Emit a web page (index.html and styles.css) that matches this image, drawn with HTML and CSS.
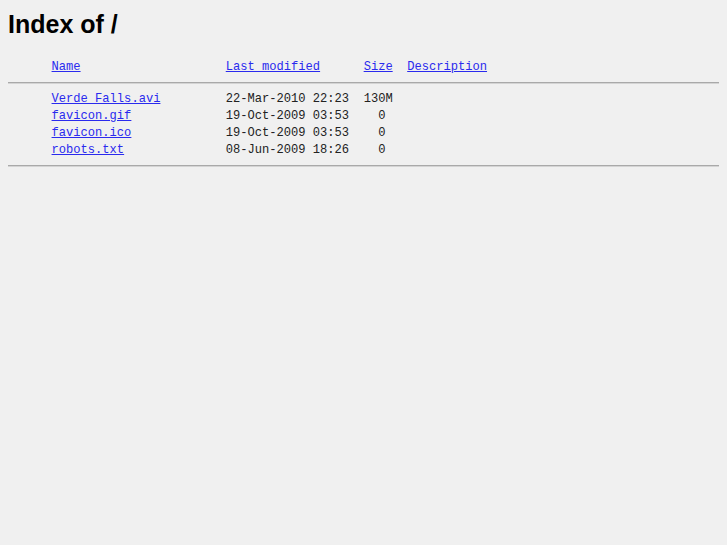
FILE: index.html
```html
<!DOCTYPE html>
<html lang="en">

<head>
    <meta charset="UTF-8">
    <title>Index of /</title>
    <link rel="stylesheet" href="styles.css">
</head>

<body>
    <h1>Index of /</h1>

    <div class="listing">
        <pre class="list-head">      <a href="?C=N;O=D">Name</a>                    <a href="?C=M;O=A">Last modified</a>      <a href="?C=S;O=A">Size</a>  <a href="?C=D;O=A">Description</a></pre>
        <hr>
        <pre class="list-rows">      <a href="Verde%20Falls.avi">Verde Falls.avi</a>         22-Mar-2010 22:23  130M  
      <a href="favicon.gif">favicon.gif</a>             19-Oct-2009 03:53    0   
      <a href="favicon.ico">favicon.ico</a>             19-Oct-2009 03:53    0   
      <a href="robots.txt">robots.txt</a>              08-Jun-2009 18:26    0   </pre>
        <hr>
    </div>
</body>
</html>
```

FILE: styles.css
```css
body {
    margin: 8px;
    background-color: #f0f0f0;
    color: #222;
    font-family: 'Liberation Sans', Arial, sans-serif;
}

h1 {
    margin: 0;
    font-size: 25px;
    line-height: 32px;
    font-weight: bold;
    color: #000;
}

.listing {
    margin-top: 19px;
}

.listing pre {
    margin: 0;
    font-family: 'Liberation Mono', 'Courier New', monospace;
    font-size: 12.1px;
    line-height: 17px;
}

.listing a {
    color: #2a2aee;
}

.listing hr {
    height: 0;
    margin: 6px 0 7px;
    border: none;
    border-top: 1px solid #a9a9a9;
    border-bottom: 1px solid #d4d4d4;
}
```
